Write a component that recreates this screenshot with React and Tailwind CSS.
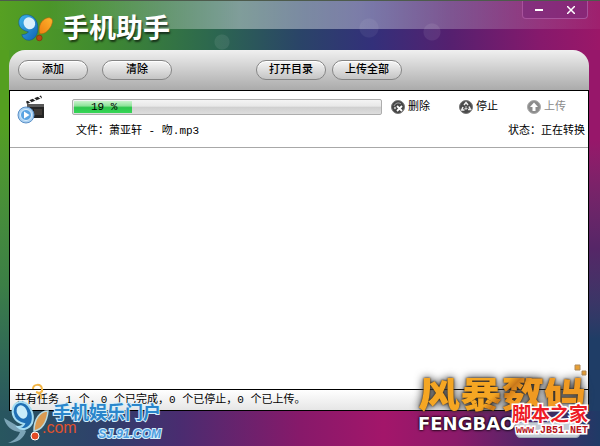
import React from 'react';

const toolbarLeft = ['添加', '清除'];
const toolbarRight = ['打开目录', '上传全部'];

const task = {
  file: '萧亚轩 - 吻.mp3',
  progress: 19,
  status: '正在转换',
};

function BugLogo({ className }) {
  return (
    <svg viewBox="0 0 38 30" className={className} aria-hidden="true">
      <defs>
        <linearGradient id="bugBlue" x1="0" y1="0" x2="1" y2="1">
          <stop offset="0" stopColor="#3fb6ee" />
          <stop offset="1" stopColor="#0f62b4" />
        </linearGradient>
        <linearGradient id="bugOrange" x1="1" y1="0" x2="0" y2="1">
          <stop offset="0" stopColor="#ffb52e" />
          <stop offset="1" stopColor="#ee7f10" />
        </linearGradient>
      </defs>
      <path
        d="M9 1C3 1 0 6 1 11c1 5 6 7 10 8-1 2-4 3-7 3 1 4 4 6 8 6 6-1 9-6 9-13C21 7 16 1 9 1z"
        fill="url(#bugBlue)"
        stroke="#124f8a"
        strokeWidth=".6"
      />
      <ellipse cx="12" cy="10" rx="6" ry="6.500" transform="rotate(-35 12 10)" fill="#d9effc" />
      <path
        d="M36 6c-3-4-9-1-12 4-2 4-2 8-1 11 5 1 9-3 12-8 1-3 2-5 1-7z"
        fill="url(#bugOrange)"
        stroke="#b5620c"
        strokeWidth=".6"
      />
      <circle cx="22.500" cy="25.500" r="3" fill="#b84a12" stroke="#6d3008" strokeWidth=".6" />
    </svg>
  );
}

function ClapperIcon() {
  return (
    <svg viewBox="0 0 28 30" className="h-[30px] w-7 shrink-0" aria-hidden="true">
      <path d="M9 6.500 24 .5l1 2.500L10 9z" fill="#222" />
      <path d="m11 5 3 2.500M16 3l3 2.500M21 1l3 2.500" stroke="#fff" strokeWidth="1.500" />
      <path d="M10 9h17v14H10z" fill="#242424" />
      <path d="M10 9h17v3H10z" fill="#5a5a5a" />
      <path d="M17 14h8v6h-8z" fill="#3f3a36" />
      <circle cx="9" cy="20" r="8" fill="#a9d0f0" stroke="#5b90c8" />
      <circle cx="9" cy="20" r="5.500" fill="#5aa4e2" stroke="#dcefff" />
      <path d="m7 16.500 5.500 3.500L7 23.500z" fill="#fff" />
    </svg>
  );
}

function DeleteIcon() {
  return (
    <svg viewBox="0 0 14 14" className="size-3.5" aria-hidden="true">
      <circle cx="7" cy="7" r="6.500" fill="#444" stroke="#777" />
      <path d="M3 6c1-3 5-4 7-2" stroke="#aaa" fill="none" />
      <path d="m6 6 5 5m0-5-5 5" stroke="#fff" strokeWidth="1.800" />
      <circle cx="4" cy="8" r="1.200" fill="#bbb" />
    </svg>
  );
}

function StopIcon() {
  return (
    <svg viewBox="0 0 14 14" className="size-3.5" aria-hidden="true">
      <circle cx="7" cy="7" r="6.500" fill="#4a4a4a" stroke="#777" />
      <path
        d="m5 5 2-2.500L9 5M10 6.500l1.500 3H9M5.500 10H2.700L4 7"
        stroke="#eee"
        strokeWidth="1.500"
        fill="none"
      />
      <path d="M7 6v4M5.500 8.500h3" stroke="#ccc" />
    </svg>
  );
}

function UploadIcon() {
  return (
    <svg viewBox="0 0 14 14" className="size-3.5" aria-hidden="true">
      <circle cx="7" cy="7" r="6.500" fill="#8c8c8c" stroke="#aaa" />
      <path d="M7 2.500 11 7H8.500v4h-3V7H3z" fill="#fff" />
    </svg>
  );
}

function ToolbarButton({ children }) {
  return (
    <button
      type="button"
      className="h-5 w-[70px] rounded-full border border-[#858585] bg-linear-to-b from-[#f6f6f6] to-[#c4c4c4] text-[11px] leading-none font-medium shadow-[inset_0_1px_0_#fff]"
    >
      {children}
    </button>
  );
}

function TitleBar() {
  return (
    <header className="flex h-[50px] items-start justify-between border-t border-[#4d5b4c] bg-[radial-gradient(circle_at_222px_41px,rgba(255,255,255,0.08)_7px,transparent_8px),radial-gradient(circle_at_432px_31px,rgba(255,255,255,0.08)_8px,transparent_9px),radial-gradient(circle_at_369px_27px,rgba(255,255,255,0.06)_9px,transparent_10px),linear-gradient(to_right,transparent_50px,rgba(255,255,255,0.4)_40%,rgba(255,255,255,0.36)_60%,rgba(255,255,255,0.04)),linear-gradient(to_right,#56a022,#3f8a30_17%,#2c6650_36%,#2a4468_50%,#33307a_62%,#55206f_75%,#86196c_90%,#9b1768)] bg-[size:100%_100%,100%_100%,100%_100%,100%_28px,100%_100%] bg-no-repeat pr-3 pl-[18px]">
      <div className="flex items-start gap-2 pt-2">
        <BugLogo className="mt-1 h-[30px] w-9" />
        <h1 className="pt-1 text-[27px] leading-9 font-bold text-white [text-shadow:1px_2px_2px_rgba(0,0,0,0.6)]">
          手机助手
        </h1>
      </div>
      <div className="flex h-[18px] w-[66px] rounded-b border border-t-0 border-[#a8529c] bg-[#7c2a7c]/60">
        <button type="button" aria-label="最小化" className="flex flex-1 items-center justify-center">
          <svg viewBox="0 0 8 8" className="size-2">
            <path d="M0 4h8" stroke="#fff" strokeWidth="2" />
          </svg>
        </button>
        <button type="button" aria-label="关闭" className="flex flex-1 items-center justify-center">
          <svg viewBox="0 0 8 8" className="size-2">
            <path d="m0 0 8 8m0-8L0 8" stroke="#fff" strokeWidth="1.500" />
          </svg>
        </button>
      </div>
    </header>
  );
}

function TaskRow() {
  return (
    <li className="flex gap-[27px] border-b border-[#a8a8a8] pt-1 pr-[3px] pb-2 pl-[7px]">
      <ClapperIcon />
      <div className="flex-1">
        <div className="flex items-center gap-[9px] pt-1">
          <div
            role="progressbar"
            aria-valuenow={task.progress}
            aria-valuemin={0}
            aria-valuemax={100}
            className="relative h-4 flex-1 rounded-xs border border-[#adadad] bg-[linear-gradient(to_bottom,#f4f4f4,#e8e8e8_45%,#cfcfcf_50%,#dedede)] p-px"
          >
            <div
              className="h-full bg-[linear-gradient(to_bottom,#c9f3cc,#8fe39a_40%,#2ec64c_55%,#36d657)]"
              style={{ width: `${task.progress}%` }}
            />
            <span className="absolute top-0 left-[18px] leading-[14px]">{task.progress} %</span>
          </div>
          <div className="flex leading-4">
            <button type="button" className="flex w-[68px] items-center gap-[3px]">
              <DeleteIcon />
              删除
            </button>
            <button type="button" className="flex w-[68px] items-center gap-[3px]">
              <StopIcon />
              停止
            </button>
            <button
              type="button"
              disabled
              className="flex w-[58px] items-center gap-[3px] text-[#8a8a8a]"
            >
              <UploadIcon />
              上传
            </button>
          </div>
        </div>
        <div className="flex justify-between pt-2 pl-1 leading-4">
          <span>文件：{task.file}</span>
          <span>状态：{task.status}</span>
        </div>
      </div>
    </li>
  );
}

function PortalBadge() {
  return (
    <div className="pointer-events-none absolute bottom-0 left-0 flex h-[64px] w-[170px] items-end">
      <svg viewBox="0 0 50 64" className="h-[64px] w-[50px] shrink-0" aria-hidden="true">
        <path d="M36 10c4 1 6 4 5 7M33 7c0-5 8-6 9 0 1 3-3 5-5 3" stroke="#f3b545" strokeWidth="2" fill="none" />
        <path d="M4 36c2 9 8 13 16 14-2 6-7 9-12 11 10 0 16-5 18-12" fill="#9fc8dc" opacity=".7" />
        <path
          d="M20 20c-7 1-9 9-6 15 2 4 6 6 10 7-1 2-4 3-6 3 4 4 11 2 14-4 3-9-3-22-12-21z"
          fill="#1f6fb5"
          stroke="#a5dcf2"
          strokeWidth="2"
        />
        <ellipse cx="22" cy="30" rx="5" ry="7" transform="rotate(-25 22 30)" fill="#c9ecfa" />
        <path d="M48 29c-8 0-14 8-14 20 8-1 13-9 14-20z" fill="#d99a52" stroke="#b9d9df" strokeWidth="1.500" />
        <circle cx="35" cy="54" r="4" fill="#e34a26" stroke="#fff" />
      </svg>
      <span className="-ml-2 pb-2 font-['Liberation_Sans'] text-base leading-5 text-[#e0522c]">.com</span>
      <div className="absolute bottom-1 left-[53px] flex flex-col items-end font-bold text-[#2a86cb] [-webkit-text-stroke:2px_#d5effa] [paint-order:stroke_fill]">
        <span className="text-lg leading-6">手机娱乐门户</span>
        <span className="font-['Liberation_Sans'] text-xs leading-4 text-[#4d9de0] italic">
          SJ.91.COM
        </span>
      </div>
    </div>
  );
}

function SiteBadge() {
  return (
    <div className="pointer-events-none absolute right-3 bottom-2 flex flex-col items-end">
      <svg viewBox="0 0 14 14" className="h-3.5 w-3.5" aria-hidden="true">
        <path d="M1 1h5v5H1zM8 7h4v4H8z" fill="#e8a035" stroke="#b08a5a" />
      </svg>
      <div className="w-[170px] pb-1 whitespace-nowrap">
        <p className="bg-[linear-gradient(135deg,#f5a623_45%,#c9781a_50%,#f09a22_56%)] bg-clip-text text-[42px] leading-9 font-black text-transparent [filter:drop-shadow(0_0_1px_#2b1a08)_drop-shadow(0_0_4px_#333)]">
          风暴数码
        </p>
        <p className="font-['DejaVu_Sans'] text-lg leading-5 font-bold text-white [text-shadow:0_0_3px_#000,0_0_2px_#000]">
          FENGBAO
        </p>
      </div>
      <div className="absolute right-2 bottom-0 h-4 w-16 rounded-sm border border-[#9aa7b4] bg-[#c3cbd3]" />
      <div className="absolute right-0 bottom-0 flex flex-col items-end font-bold text-[#ee1c25] [-webkit-text-stroke:3px_#fff] [paint-order:stroke_fill]">
        <span className="text-[19px] leading-4">脚本之家</span>
        <span className="font-['Liberation_Mono'] text-[10px] leading-[14px] text-[#b51218]">www.JB51.NET</span>
      </div>
    </div>
  );
}

export default function App() {
  return (
    <div className="relative flex min-h-screen flex-col overflow-hidden bg-[#2a4468] font-['Liberation_Mono','Noto_Sans_CJK_SC',monospace] text-[11px] text-black">
      <TitleBar />
      <main className="flex flex-1">
        <div className="w-[9px] bg-linear-to-b from-[#549f20] from-20% via-[#3c7f46] via-65% to-[#29565f]" />
        <div className="flex flex-1 flex-col bg-[linear-gradient(to_right,#4f9c25,#2a4468_50%,#97176a)]">
          <div className="flex h-10 items-center rounded-t-2xl bg-linear-to-b from-[#f0f0f0] to-[#ababab] pl-[9px]">
            <div className="flex gap-[14px]">
              {toolbarLeft.map(label => (
                <ToolbarButton key={label}>{label}</ToolbarButton>
              ))}
            </div>
            <div className="ml-[84px] flex gap-1.5">
              {toolbarRight.map(label => (
                <ToolbarButton key={label}>{label}</ToolbarButton>
              ))}
            </div>
          </div>
          <ul className="flex-1 border border-black bg-white">
            <TaskRow />
          </ul>
          <footer className="border-x border-b border-black bg-linear-to-b from-white to-[#e6e6e6] px-[5px] leading-5">
            共有任务 1 个，0 个已完成，0 个已停止，0 个已上传。
          </footer>
        </div>
        <div className="w-[11px] bg-linear-to-b from-[#97176a] from-25% via-[#552667] via-55% to-[#1f3d66] to-80%" />
      </main>
      <div className="h-[35px] bg-[linear-gradient(to_right,#28565f,#2f3f6c_18%,#4a2c70_30%,#87196a_50%,#a3166a_64%,#8b1a6a_76%,#4f2668_88%,#1f3a66)]" />
      <PortalBadge />
      <SiteBadge />
    </div>
  );
}
